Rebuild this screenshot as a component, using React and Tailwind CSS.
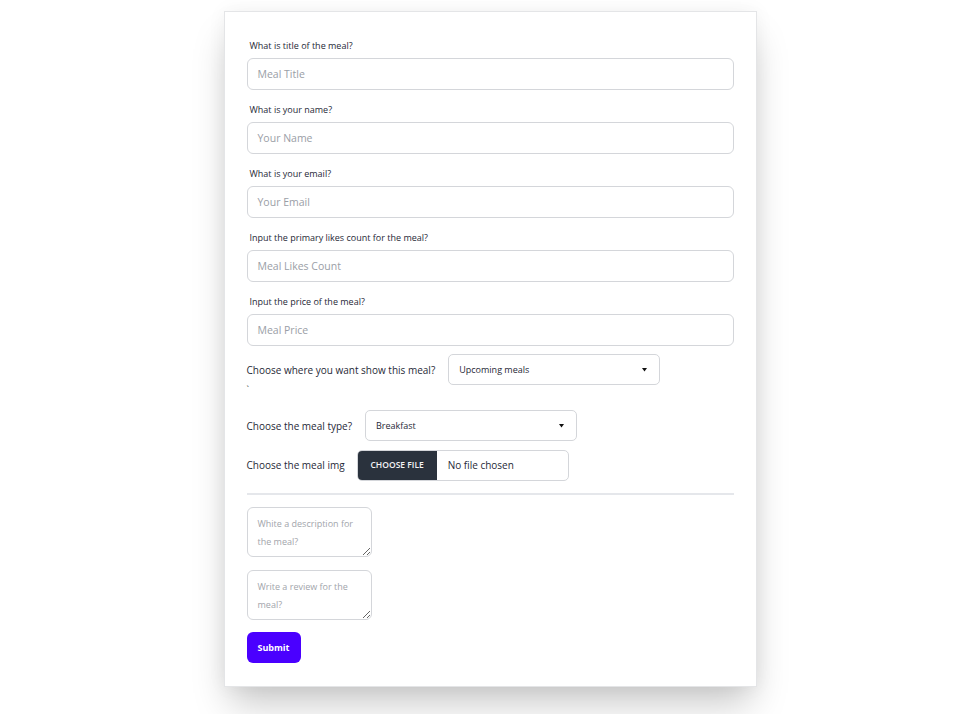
import React from "react";

const font = { fontFamily: '"Open Sans", "Noto Sans", sans-serif' };

function Field({ label, placeholder }) {
  return (
    <div className="mb-[13px]">
      <div className="ml-[3px] mb-[7px] h-[12px] pt-[1px] text-[9px] leading-[12px] text-[#1f2937]">{label}</div>
      <div className="h-[32px] w-full rounded-[6px] border border-[#d4d6da] bg-white flex items-center pl-[10px] pt-[1px] text-[10.5px] text-[#9a9ea6]">
        {placeholder}
      </div>
    </div>
  );
}

function Select({ value }) {
  return (
    <div className="h-[31px] w-[212px] rounded-[5px] border border-[#d4d6da] bg-white flex items-center justify-between pl-[10px] pr-[12px] text-[9px] text-[#1f2937]">
      <span>{value}</span>
      <svg width="5" height="4" viewBox="0 0 5 4"><path d="M0 0 L5 0 L2.5 3.5 Z" fill="#111" /></svg>
    </div>
  );
}

export default function App() {
  return (
    <div className="min-h-[714px] w-full bg-white flex justify-center pt-[11px]" style={font}>
      <div className="w-[533px] h-fit border border-[#e4e5e7] bg-white px-[22px] pt-[27px] pb-[23px] shadow-[0_22px_35px_-6px_rgba(0,0,0,0.22),0_0_18px_rgba(0,0,0,0.05)]">
        <Field label="What is title of the meal?" placeholder="Meal Title" />
        <Field label="What is your name?" placeholder="Your Name" />
        <Field label="What is your email?" placeholder="Your Email" />
        <Field label="Input the primary likes count for the meal?" placeholder="Meal Likes Count" />
        <div>
          <div className="ml-[3px] mb-[7px] h-[12px] pt-[1px] text-[9px] leading-[12px] text-[#1f2937]">Input the price of the meal?</div>
          <div className="h-[32px] w-full rounded-[6px] border border-[#d4d6da] bg-white flex items-center pl-[10px] pt-[1px] text-[10.5px] text-[#9a9ea6]">
            Meal Price
          </div>
        </div>
        <div className="mt-[8px] flex items-center gap-[13px]">
          <span className="text-[10px] text-[#1f2937] pt-[1px]">Choose where you want show this meal?</span>
          <Select value="Upcoming meals" />
        </div>
        <div className="h-[17px] text-[9px] leading-[10px] text-[#444]">`</div>
        <div className="mt-[8px] flex items-center gap-[13px]">
          <span className="text-[10px] text-[#1f2937] pt-[1px]">Choose the meal type?</span>
          <Select value="Breakfast" />
        </div>
        <div className="mt-[9px] flex items-center gap-[12px]">
          <span className="text-[10px] text-[#1f2937]">Choose the meal img</span>
          <div className="h-[31px] w-[212px] rounded-[5px] border border-[#d4d6da] bg-white flex items-stretch overflow-hidden">
            <div className="w-[79px] bg-[#2a323d] text-[#f3f4f6] text-[8.5px] font-semibold flex items-center justify-center">CHOOSE FILE</div>
            <div className="flex items-center pl-[11px] text-[10px] text-[#1f2937]">No file chosen</div>
          </div>
        </div>
        <div className="mt-[12px] h-[2px] w-full bg-[#e5e7eb]" />
        <textarea
          className="mt-[12px] block w-[125px] h-[50px] rounded-[6px] border border-[#d4d6da] px-[10px] pt-[7px] text-[9px] leading-[18px] placeholder:text-[#a2a5ab] outline-none"
          placeholder="White a description for the meal?"
        />
        <textarea
          className="mt-[13px] block w-[125px] h-[50px] rounded-[6px] border border-[#d4d6da] px-[10px] pt-[7px] text-[9px] leading-[18px] placeholder:text-[#a2a5ab] outline-none"
          placeholder="Write a review for the meal?"
        />
        <button className="mt-[12px] h-[31px] w-[54px] rounded-[6px] bg-[#4a00ff] text-white text-[9px] font-bold flex items-center justify-center pt-[1px]">
          Submit
        </button>
      </div>
    </div>
  );
}
